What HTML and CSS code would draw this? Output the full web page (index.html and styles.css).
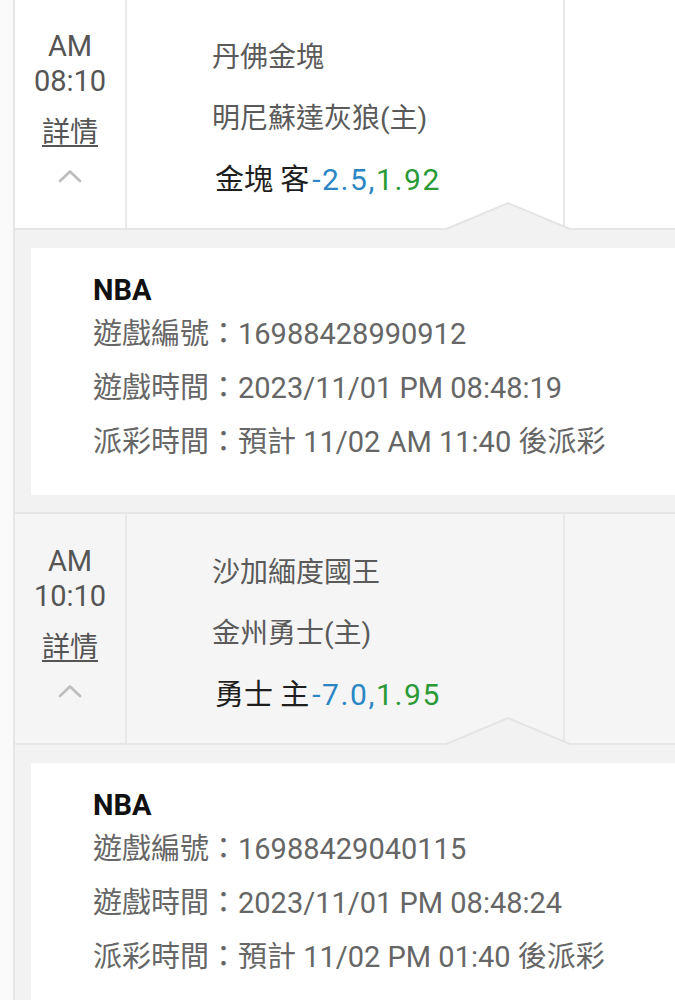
FILE: index.html
```html
<!DOCTYPE html>
<html lang="zh-Hant">
<head>
<meta charset="utf-8">
<title>注單</title>
<link rel="stylesheet" href="styles.css">
</head>
<body>
<div class="list">
  <div class="row">
    <div class="time-col">
      <div class="time">AM<br>08:10</div>
      <a class="detail-link">詳情</a>
      <svg class="chev" width="24" height="15" viewBox="0 0 24 15"><polyline points="2,13 12,3.5 22,13" /></svg>
    </div>
    <div class="teams">
      <div class="team">丹佛金塊</div>
      <div class="team">明尼蘇達灰狼(主)</div>
      <div class="bet">金塊 客<span class="hcp">-2.5,</span><span class="odds">1.92</span></div>
    </div>
    <div class="extra"></div>
    <svg class="notch" width="124" height="30" viewBox="0 0 124 30"><polygon class="notch-fill" points="0,29 62,3 124,29 124,30 0,30" /><polyline class="notch-line" points="0,29 62,3 124,29" /></svg>
  </div>
  <div class="details">
    <div class="card">
      <div class="league">NBA</div>
      <div class="line">遊戲編號：16988428990912</div>
      <div class="line">遊戲時間：2023/11/01 PM 08:48:19</div>
      <div class="line">派彩時間：預計 11/02 AM 11:40 後派彩</div>
    </div>
  </div>
  <div class="row row-alt">
    <div class="time-col">
      <div class="time">AM<br>10:10</div>
      <a class="detail-link">詳情</a>
      <svg class="chev" width="24" height="15" viewBox="0 0 24 15"><polyline points="2,13 12,3.5 22,13" /></svg>
    </div>
    <div class="teams">
      <div class="team">沙加緬度國王</div>
      <div class="team">金州勇士(主)</div>
      <div class="bet">勇士 主<span class="hcp">-7.0,</span><span class="odds">1.95</span></div>
    </div>
    <div class="extra"></div>
    <svg class="notch" width="124" height="30" viewBox="0 0 124 30"><polygon class="notch-fill" points="0,29 62,3 124,29 124,30 0,30" /><polyline class="notch-line" points="0,29 62,3 124,29" /></svg>
  </div>
  <div class="details">
    <div class="card">
      <div class="league">NBA</div>
      <div class="line">遊戲編號：16988429040115</div>
      <div class="line">遊戲時間：2023/11/01 PM 08:48:24</div>
      <div class="line">派彩時間：預計 11/02 PM 01:40 後派彩</div>
    </div>
  </div>
</div>
</body>
</html>
```

FILE: styles.css
```css
html, body {
  margin: 0;
  padding: 0;
}
body {
  background: #fafafa;
  font-family: Roboto, "Noto Sans CJK TC", "Noto Sans", sans-serif;
  overflow: hidden;
}
.list {
  margin-left: 13px;
  margin-top: -3px;
  border-left: 2px solid #e6e6e6;
}
.row {
  position: relative;
  display: grid;
  grid-template-columns: 112px 438px 1fr;
  height: 229px;
  border-top: 2px solid #e6e6e6;
  border-bottom: 2px solid #e6e6e6;
  background: #ffffff;
}
.row-alt {
  background: #f5f5f5;
}
.time-col {
  box-sizing: border-box;
  border-right: 2px solid #e8e8e8;
  display: flex;
  flex-direction: column;
  align-items: center;
  padding-top: 30px;
  color: #555555;
}
.time {
  font-size: 29px;
  line-height: 35px;
  text-align: center;
}
.detail-link {
  margin-top: 16px;
  font-size: 28px;
  line-height: 36px;
  color: #555555;
  text-decoration: underline;
  text-decoration-thickness: 1.5px;
  text-underline-offset: 3px;
}
.chev {
  display: block;
  margin-top: 17px;
}
.chev polyline {
  fill: none;
  stroke: #bdbdbd;
  stroke-width: 2.6;
  stroke-linecap: round;
  stroke-linejoin: round;
}
.teams {
  box-sizing: border-box;
  border-right: 2px solid #e8e8e8;
  padding-left: 85px;
  padding-top: 28px;
}
.team {
  font-size: 28px;
  line-height: 61px;
  color: #5a5a5a;
  white-space: nowrap;
}
.bet {
  font-size: 29px;
  line-height: 61px;
  color: #1e1e1e;
  white-space: nowrap;
  padding-left: 3px;
}
.hcp {
  font-size: 30px;
  color: #2b86c4;
  margin-left: 3px;
  letter-spacing: 1.6px;
}
.odds {
  font-size: 30px;
  color: #2a9a36;
  letter-spacing: 1.6px;
}
.notch {
  position: absolute;
  left: 431px;
  bottom: -2px;
  display: block;
}
.notch-fill {
  fill: #f2f2f2;
}
.notch-line {
  fill: none;
  stroke: #e4e4e4;
  stroke-width: 2;
}
.details {
  background: #f2f2f2;
  padding: 18px 0 17px 16px;
}
.card {
  box-sizing: border-box;
  height: 247px;
  background: #ffffff;
  padding: 26px 0 0 62px;
}
.league {
  font-size: 29px;
  font-weight: 700;
  line-height: 33px;
  color: #111111;
}
.line {
  font-size: 29px;
  line-height: 54px;
  color: #666666;
  white-space: nowrap;
}
```
